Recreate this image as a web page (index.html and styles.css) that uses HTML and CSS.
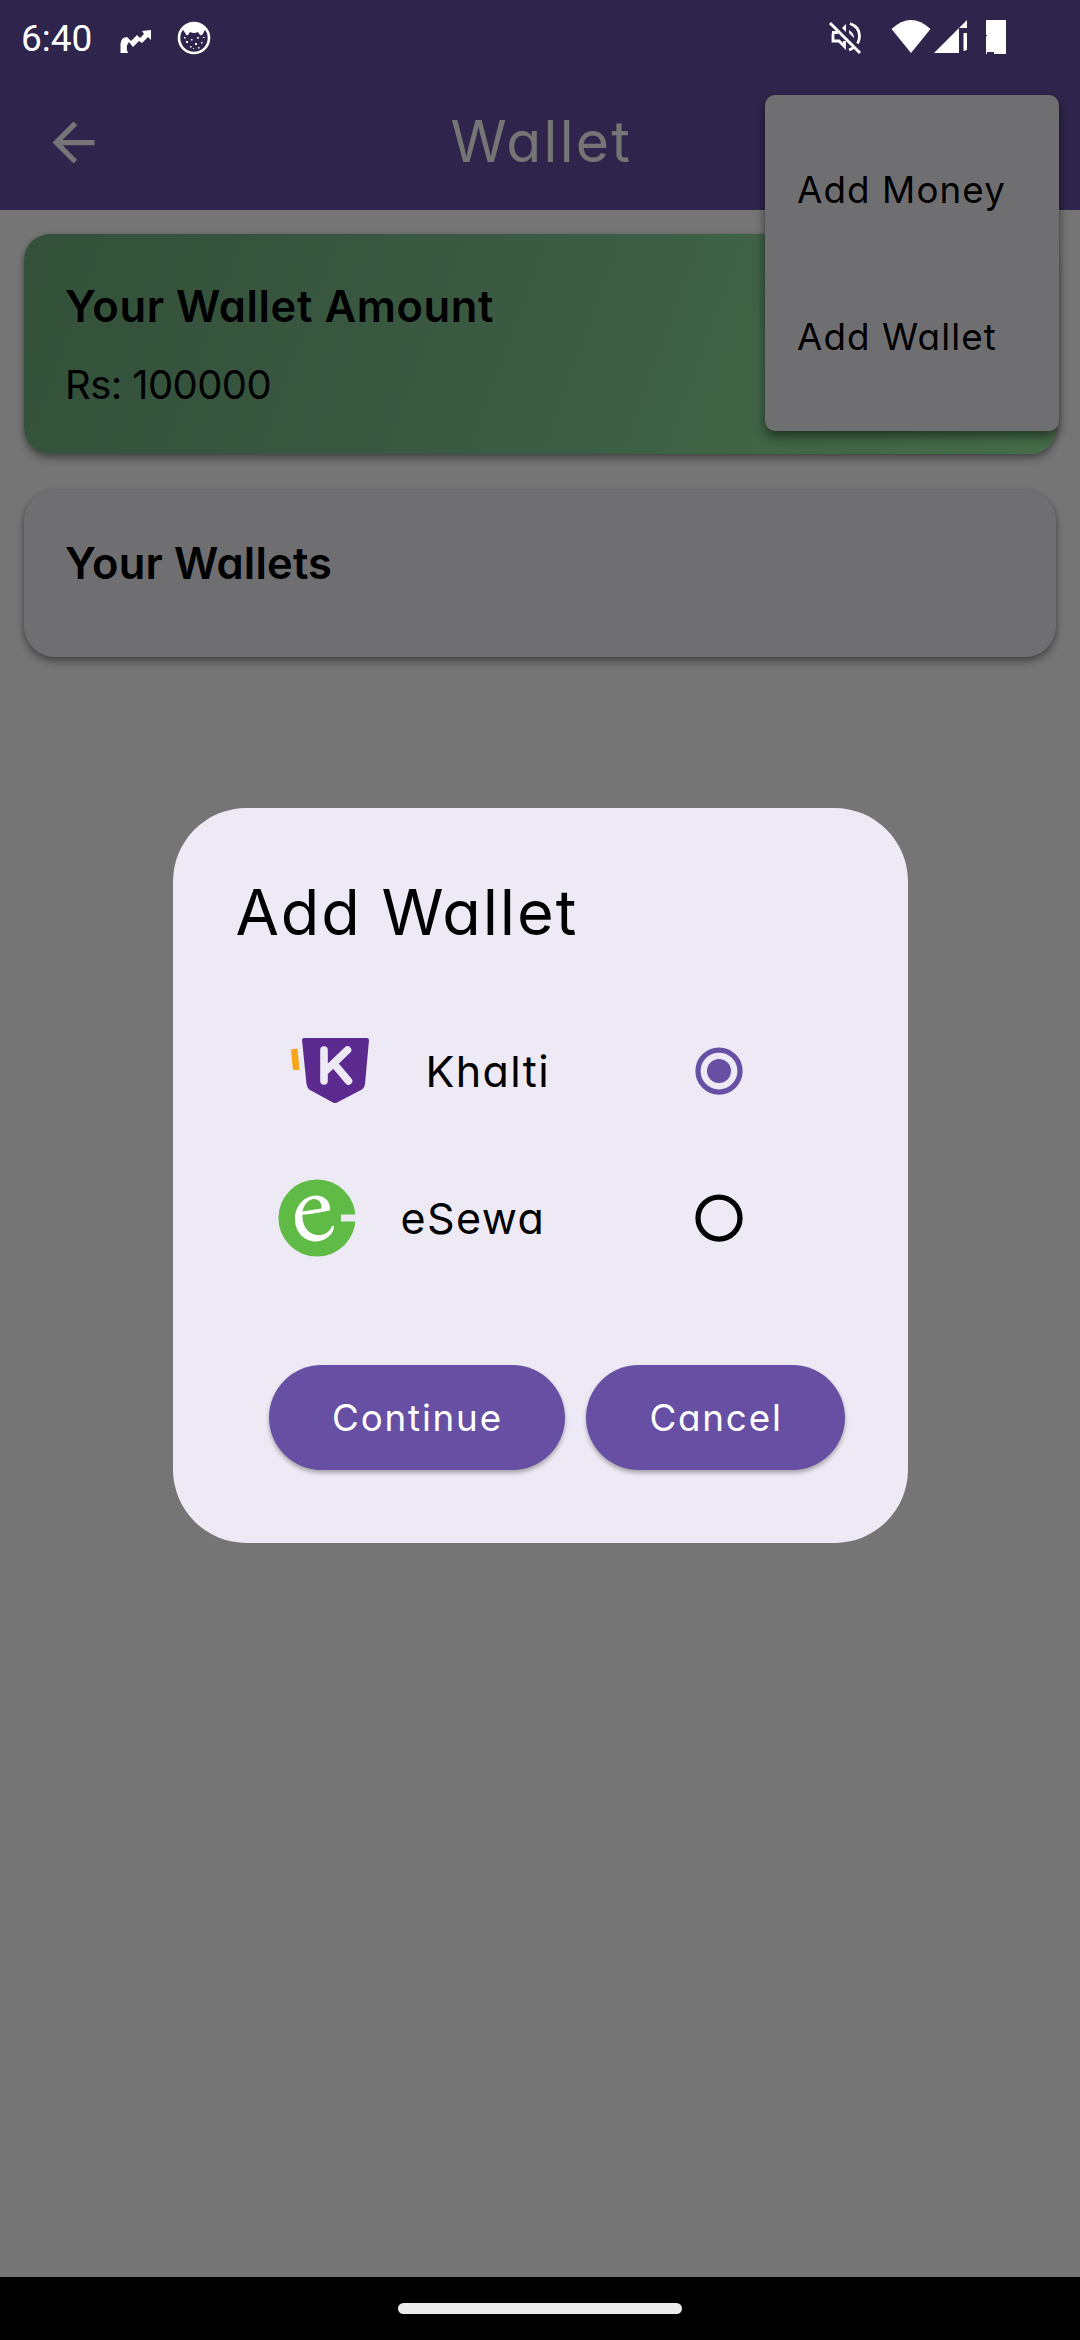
FILE: index.html
```html
<!DOCTYPE html>
<html lang="en">
<head>
<meta charset="utf-8">
<title>Wallet</title>
<link rel="stylesheet" href="styles.css">
</head>
<body>
<div class="screen">
  <header class="app-bar">
    <svg class="back" viewBox="0 0 24 24"><path d="M20 11H7.83l5.59-5.59L12 4l-8 8 8 8 1.41-1.41L7.83 13H20z"/></svg>
    <h1 class="app-title">Wallet</h1>
  </header>
  <main class="content">
    <section class="card card-amount">
      <h2 class="card-title t-amount">Your Wallet Amount</h2>
      <p class="amount">Rs: 100000</p>
    </section>
    <section class="card card-wallets">
      <h2 class="card-title t-wallets">Your Wallets</h2>
    </section>
  </main>
  <footer class="nav-bar"><span class="nav-pill"></span></footer>

  <div class="menu">
    <div class="menu-item">Add Money</div>
    <div class="menu-item">Add Wallet</div>
  </div>

  <div class="scrim">
    <div class="dialog">
      <h2 class="dialog-title">Add Wallet</h2>
      <div class="option">
        <svg class="logo logo-khalti" viewBox="0 0 80 66">
          <path fill="#f9a51a" d="M1 11.5l6.5-1L9.500 31q0 1-1 1H4q-1 0-1.200-1z"/>
          <path fill="#5c2a8e" d="M14 0h63q2 0 2 2l-4 44q-.5 4-4 6L48 64q-3 2-6 0L20 52q-3-2-3.500-6L12 2q0-2 2-2z"/>
          <path stroke="#eeeaf5" stroke-width="7.600" stroke-linecap="round" fill="none" d="M34 12v31M57.500 12L36 32.500M45 27l13.500 16"/>
        </svg>
        <span class="option-name n-khalti">Khalti</span>
        <svg class="radio" viewBox="0 0 48 48"><circle cx="24" cy="24" r="21" fill="none" stroke="#6750a4" stroke-width="5.250"/><circle cx="24" cy="24" r="12" fill="#6750a4"/></svg>
      </div>
      <div class="option">
        <svg class="logo logo-esewa" viewBox="0 0 78 78">
          <circle cx="39" cy="39" r="38.600" fill="#60bb46"/>
          <path fill="#eeeaf5" d="M63 35.500h15v7H63z"/>
          <path fill="#fff" fill-rule="evenodd" d="M24.500 35.500C29 36 44 33 52 31.500C53 22 46 16.500 38 16.500C25 17 17 28 17 40C17 53 26 62.500 38 62.500C48 62 56 55 56 47H54C52 53 46 56.500 39 56C29 55 24 46 24.500 35.500ZM24.500 32.500C26 25 31 20 36 20C41 20 44 24 43.500 29.500Z"/>
        </svg>
        <span class="option-name n-esewa">eSewa</span>
        <svg class="radio" viewBox="0 0 48 48"><circle cx="24" cy="24" r="21" fill="none" stroke="#000" stroke-width="5.250"/></svg>
      </div>
      <div class="actions">
        <button class="btn b-continue">Continue</button>
        <button class="btn b-cancel">Cancel</button>
      </div>
    </div>
  </div>

  <div class="status-bar">
    <span class="time">6:40</span>
    <svg class="st-trend" viewBox="0 0 32 24"><path d="M.5 23V14Q1 7 7 7L11 11L17 5L20 8L24 4L22 1L31 0V10L28 7L22 13L19 11L13 17L9 12Q5 17 8 23Z"/></svg>
    <svg class="st-cat" viewBox="0 0 34 34"><circle cx="17" cy="17" r="15" fill="none" stroke="#fff" stroke-width="2.600"/><path d="M5.500 8Q17-3 28.500 8L26 12.500Q25 15 23 14L21 11Q17 13 13 11L11 14Q9 15 8.500 12.500Z"/><path d="M9 20h2v2H9zM14 18h1.500v1.500H14zM20 16h2v1.500h-2zM18 22h2v2h-2zM24 21h1.500v1.500H24zM13 25h1.500v1.500H13zM21 26h1.500v1.500H21zM16 27h1v1h-1zM26 16h1.500v1H26zM7 16h1.500v1.500H7z"/></svg>
    <svg class="st-mute" viewBox="0 0 34 34"><path fill="none" stroke="#fff" stroke-width="3" d="M2 2L32 32"/><path fill="none" stroke="#fff" stroke-width="2.800" d="M5 12.500V20h6l5.500 5.500V20M4 11.500h6M22 2.500Q31.500 6 31.500 15Q31.500 19 29.500 22.500M26 26Q24 28 21 29"/><path d="M18 3v8l-4-4zM21 9q5 3 5 8l-5-5z"/></svg>
    <svg class="st-wifi" viewBox="0 0 40 33"><path d="M20 33L.5 9Q20-9 39.500 9Z"/></svg>
    <svg class="st-cell" viewBox="0 0 34 34"><path d="M0 33L33 0V8H25V33ZM29.500 13H33V30L29.500 31Z"/></svg>
    <svg class="st-battery" viewBox="0 0 20 34"><path d="M0 0H20V34H8V32H1V34H0V16H1V15H0Z"/></svg>
  </div>
</div>
</body>
</html>
```
FILE: styles.css
```css
* { box-sizing: border-box; }
body, h1, h2, p { margin: 0; font-weight: 400; }
body {
  font-family: Inter, "Open Sans", sans-serif;
  font-feature-settings: "cv11" 1;
  color: #000;
}
.screen {
  position: relative;
  width: 1080px;
  height: 2340px;
  background: #fff;
  display: flex;
  flex-direction: column;
  overflow: hidden;
  white-space: nowrap;
}
.app-bar {
  height: 210px;
  padding-top: 75px;
  background: #6750a4;
  display: grid;
  grid-template-columns: 148px 1fr 148px;
  align-items: center;
}
.back { width: 63px; height: 63px; margin-left: 42px; fill: #fff; }
.app-title {
  text-align: center;
  font-size: 57px;
  line-height: 80px;
  letter-spacing: 2.350px;
  padding: 0 0 1px 3px;
  color: #fff;
}
.content { flex: 1; padding: 24px; display: flex; flex-direction: column; gap: 36px; }
.card { padding-left: 41px; box-shadow: 0 5px 8px rgba(0, 0, 0, .32), 0 1px 5px rgba(0, 0, 0, .2); }
.card-amount {
  height: 220px;
  padding-top: 42px;
  border-radius: 26px;
  background: linear-gradient(110deg, #70ae7d, #82c692 48%, #97ee9f);
}
.card-wallets {
  height: 167px;
  padding-top: 43px;
  border-radius: 31px;
  background: #f2f1f6;
}
.card-title { font-size: 43.500px; line-height: 60px; font-weight: 600; }
.t-amount { letter-spacing: .6px; }
.t-wallets { letter-spacing: .2px; }
.amount { font-size: 40px; line-height: 60px; letter-spacing: -.6px; margin-top: 19px; }
.nav-bar {
  height: 63px;
  background: #000;
  display: flex;
  justify-content: center;
  padding-top: 26px;
  position: relative;
  z-index: 3;
}
.nav-pill { width: 284px; height: 11px; border-radius: 6px; background: #ebebeb; }
.menu {
  position: absolute;
  left: 765px;
  top: 95px;
  width: 294px;
  height: 336px;
  padding: 21px 0 21px 32px;
  border-radius: 10px;
  background: #f2f1f6;
  box-shadow: 0 7px 12px rgba(0, 0, 0, .36), 0 2px 6px rgba(0, 0, 0, .2);
}
.menu-item { height: 147px; display: flex; align-items: center; font-size: 36.750px; letter-spacing: 1.100px; }
.scrim {
  position: absolute;
  inset: 0;
  z-index: 2;
  background: rgba(0, 0, 0, .54);
  display: flex;
  justify-content: center;
  align-items: flex-start;
  padding-top: 808px;
}
.dialog {
  width: 735px;
  height: 734.500px;
  border-radius: 73.500px;
  background: #eeeaf5;
  padding: 62px 63px 73px;
  display: flex;
  flex-direction: column;
}
.dialog-title { font-size: 63px; line-height: 84px; letter-spacing: 1.900px; margin-bottom: 43px; }
.option {
  height: 147px;
  display: grid;
  grid-template-columns: 165px 1fr 48px;
  align-items: center;
  padding: 0 102px 0 0;
}
.option-name { font-size: 43px; letter-spacing: 1.400px; }
.logo-khalti { width: 80px; height: 66px; margin-left: 54px; }
.logo-esewa { width: 78px; height: 78px; margin-left: 42px; }
.radio { width: 48px; height: 48px; }
.n-khalti { padding-left: 25px; }
.actions { margin-top: auto; display: flex; justify-content: flex-end; gap: 21px; }
.btn {
  height: 105px;
  padding: 0 0 0 2px;
  border: 0;
  border-radius: 53px;
  background: #6750a4;
  color: #fff;
  font: inherit;
  font-size: 36.750px;
  letter-spacing: 1.800px;
  box-shadow: 0 3px 4px rgba(0, 0, 0, .3);
}
.b-continue { width: 296px; }
.b-cancel { width: 259px; }
.status-bar {
  position: absolute;
  inset: 0 0 auto 0;
  z-index: 3;
  height: 74px;
  display: flex;
  align-items: center;
  color: #fff;
  fill: #fff;
}
.time { width: 98px; padding-left: 21px; font: 37px/74px Roboto, sans-serif; padding-top: 4px; }
.st-trend { width: 32px; height: 24px; margin: 9px 0 0 22px; }
.st-cat { width: 34px; height: 34px; margin: 2px 0 0 25px; }
.st-mute { width: 34px; height: 34px; margin: 2px 0 0 617px; }
.st-wifi { width: 40px; height: 33px; margin: -1px 0 0 29px; }
.st-cell { width: 34px; height: 34px; margin: 0 0 0 3px; }
.st-battery { width: 20px; height: 34px; margin: 0 0 0 18px; }
```
